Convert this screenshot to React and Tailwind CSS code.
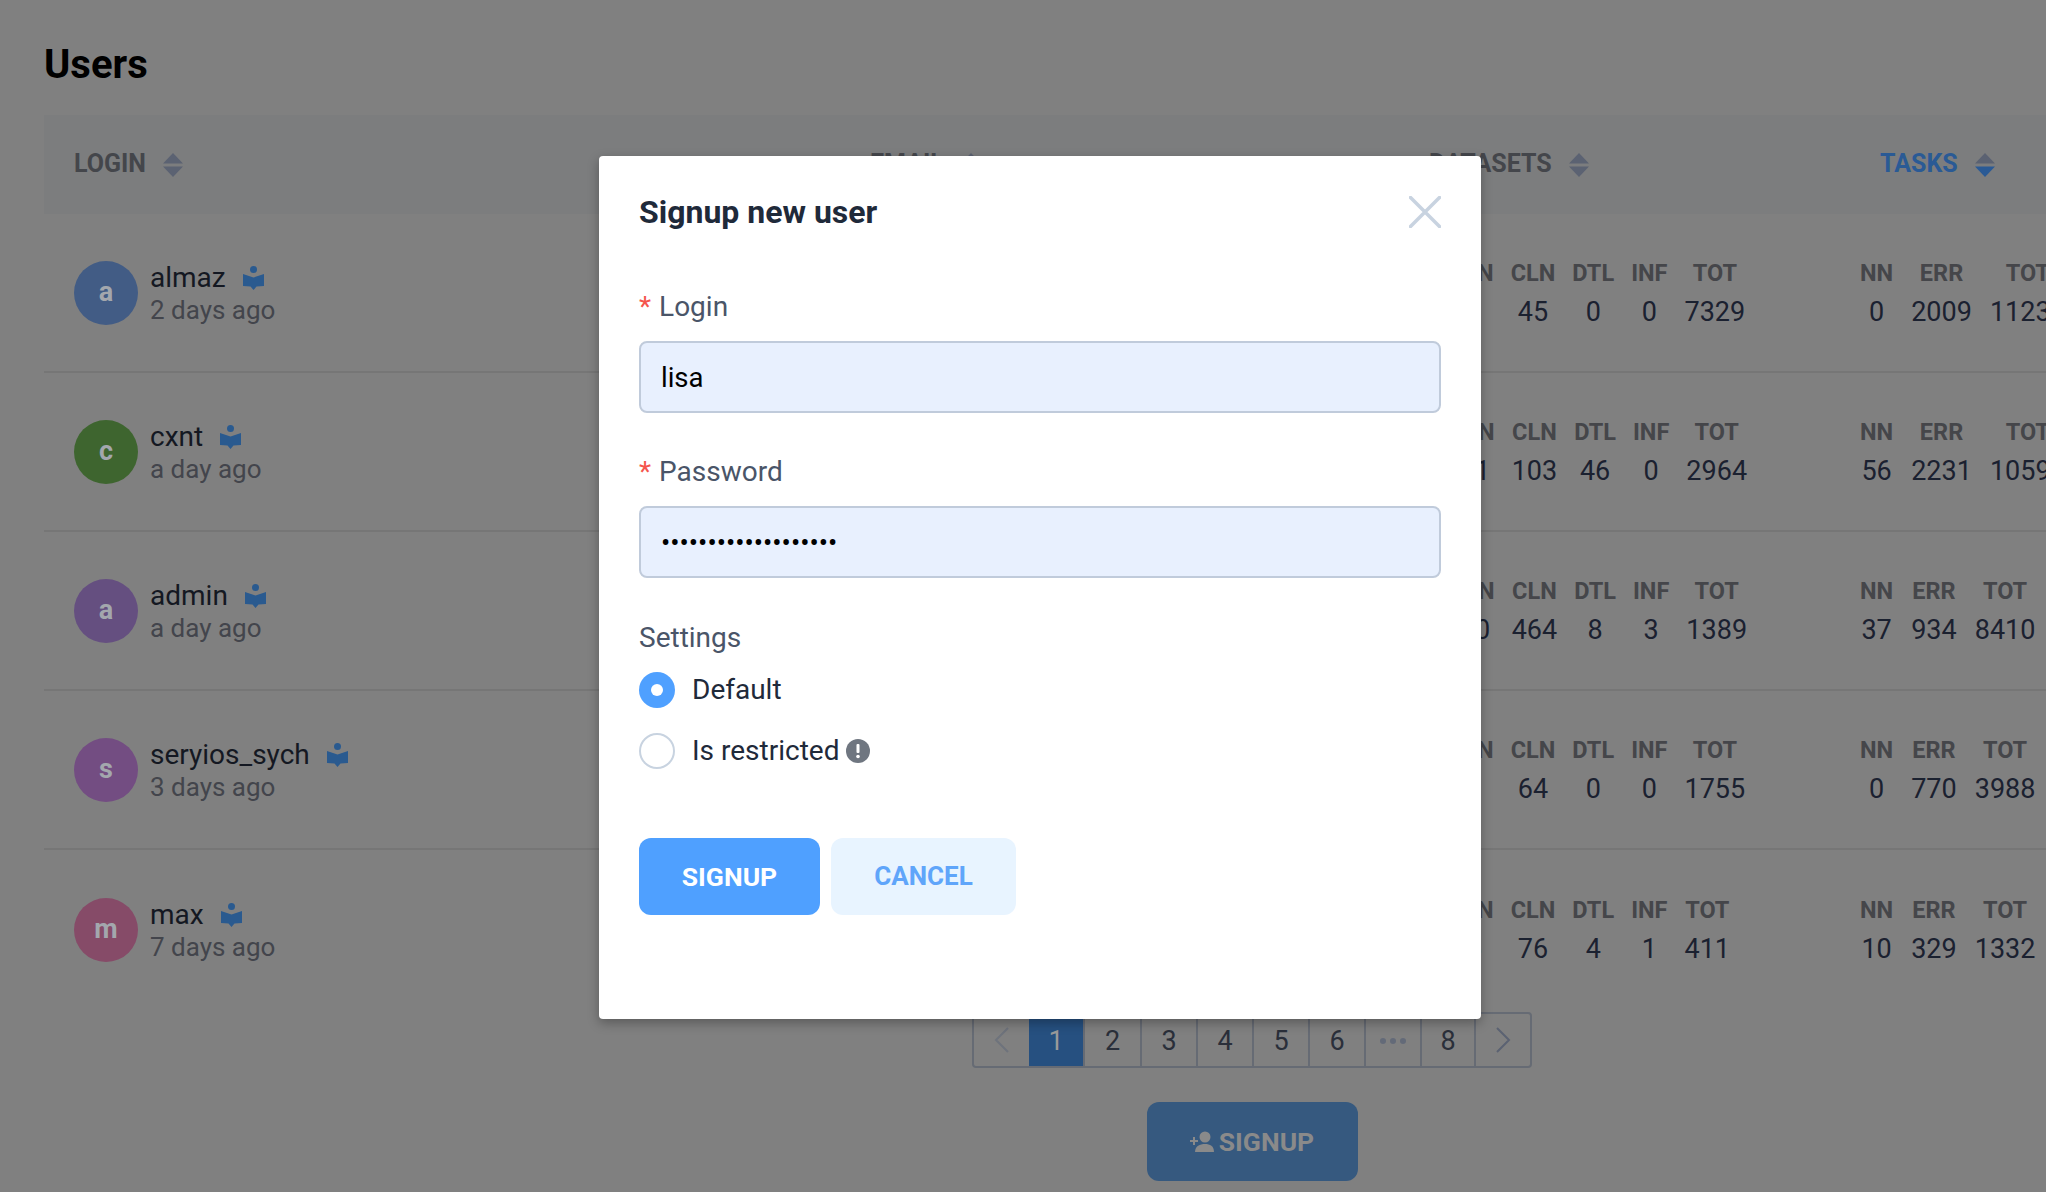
const users = [
  { l: 'a', name: 'almaz', ago: '2 days ago', c: 'bg-[#425c85]', shift: '', d: ['0', '45', '0', '0', '7329'], t: ['0', '2009', '11234'] },
  { l: 'c', name: 'cxnt', ago: 'a day ago', c: 'bg-[#3e652f]', shift: 'ml-[1px]', d: ['21', '103', '46', '0', '2964'], t: ['56', '2231', '10598'] },
  { l: 'a', name: 'admin', ago: 'a day ago', c: 'bg-[#654f80]', shift: 'ml-[1px]', d: ['10', '464', '8', '3', '1389'], t: ['37', '934', '8410'] },
  { l: 's', name: 'seryios_sych', ago: '3 days ago', c: 'bg-[#734d82]', shift: '', d: ['0', '64', '0', '0', '1755'], t: ['0', '770', '3988'] },
  { l: 'm', name: 'max', ago: '7 days ago', c: 'bg-[#864b68]', shift: '', d: ['5', '76', '4', '1', '411'], t: ['10', '329', '1332'] },
];

function Sort({ active }) {
  return (
    <svg width="20" height="24" viewBox="0 0 20 24" className="shrink-0">
      <path d="M10 0 L20 10.5 H0 Z" fill="#5b6272" />
      <path d="M0 13.5 H20 L10 24 Z" fill={active ? '#2a5a95' : '#5b6272'} />
    </svg>
  );
}

function Reader() {
  return (
    <svg width="21" height="24" viewBox="0 0 21 24" className="shrink-0">
      <circle cx="10.5" cy="3.6" r="3.5" fill="#2a5a8f" />
      <path d="M0 8 L10.5 11.5 L21 8 V20 L13.5 20.6 L10.5 24 L7.5 20.6 L0 20 Z" fill="#2a5a8f" />
    </svg>
  );
}

function Head({ label, active, className }) {
  return (
    <div className={`flex items-center gap-[17px] font-bold text-[25px] ${active ? 'text-[#2a5a95]' : 'text-[#44464b]'} ${className}`}>
      <span className="-mt-[1px]">{label}</span>
      <Sort active={active} />
    </div>
  );
}

function Stats({ heads, values, className, pad, firstValue = '' }) {
  return (
    <table className={`text-center ${className}`}>
      <thead>
        <tr className="h-[38px]">
          {heads.map((h) => (
            <th key={h} className={`${pad} py-0 font-bold text-[23.5px] text-[#45464a]`}>{h}</th>
          ))}
        </tr>
      </thead>
      <tbody>
        <tr className="h-[38px]">
          {values.map((v, i) => (
            <td key={i} className={`${pad} py-0 text-[27px] text-[#1b2130]`}>
              <span className={`inline-block ${i === 0 ? firstValue : ''}`}>{v}</span>
            </td>
          ))}
        </tr>
      </tbody>
    </table>
  );
}

function Page({ children, active, w = 'w-[56px]' }) {
  return (
    <div className={`${w} h-full pt-[2px] flex items-center justify-center border-r-2 border-[#666b74] text-[27px] ${active ? 'bg-[#265080] text-[#9a9a9a] border-r-0' : 'text-[#2a2f3a]'}`}>
      {children}
    </div>
  );
}

function Field({ label, type, value, className }) {
  return (
    <div className={className}>
      <div className="h-[40px] flex items-center text-[28px] text-[#4a5568]">
        <span className="text-[#f5554d] mr-[8px]">*</span>
        {label}
      </div>
      <input
        readOnly
        type={type}
        defaultValue={value}
        className="mt-[14px] block w-full h-[72px] rounded-[8px] border-2 border-[#c0cbdb] bg-[#e8f0fe] px-[20px] text-[27.5px] text-black outline-none"
      />
    </div>
  );
}

export default function App() {
  return (
    <div className="relative w-full h-[1192px] overflow-hidden bg-[#808080] font-['Roboto',sans-serif]">
      <div className="w-[2416px] ml-[44px]">
        <h1 className="pt-[41px] h-[88px] leading-[48px] text-[40px] font-bold text-black">Users</h1>

        <div className="mt-[27px] h-[99px] bg-[#7c7d7e] grid grid-cols-[796px_559px_451px_1fr] items-center">
          <Head label="LOGIN" className="pl-[30px]" />
          <Head label="EMAIL" className="pl-[30px]" />
          <Head label="DATASETS" className="pl-[30px]" />
          <Head label="TASKS" active className="pl-[30px]" />
        </div>

        {users.map((u, i) => (
          <div
            key={u.name}
            className={`h-[159px] grid grid-cols-[796px_559px_451px_1fr] items-center ${i < users.length - 1 ? 'border-b-2 border-[#767676]' : ''}`}
          >
            <div className="pl-[30px] flex items-center gap-[12px]">
              <div className={`w-[64px] h-[64px] rounded-full flex items-center justify-center text-[27px] font-bold text-[#a3a7ad] ${u.c}`}>
                {u.l}
              </div>
              <div className="flex flex-col mt-[2px]">
                <div className="flex items-center gap-[17px] h-[32px] text-[28px] text-[#141822]">
                  <span>{u.name}</span>
                  <Reader />
                </div>
                <div className="h-[32px] leading-[32px] text-[26px] text-[#43454c]">{u.ago}</div>
              </div>
            </div>
            <div />
            <div className={`mt-[2px] ${u.shift}`}>
              <Stats
                heads={['NN', 'CLN', 'DTL', 'INF', 'TOT']}
                values={u.d}
                pad="px-[8.5px]"
                firstValue="-translate-x-[3px]"
                className="ml-[53px]"
              />
            </div>
            <div className="mt-[2px]">
              <Stats heads={['NN', 'ERR', 'TOT']} values={u.t} pad="px-[9px]" className="ml-[1px]" />
            </div>
          </div>
        ))}

        <div className="mt-[3px] flex justify-center">
          <div className="h-[56px] flex items-center rounded-[4px] border-2 border-[#666b74]">
            <div className="w-[55px] h-full flex items-center justify-center">
              <svg width="16" height="26" viewBox="0 0 16 26" fill="none" stroke="#6e737c" strokeWidth="2"><path d="M14 1 L2 13 L14 25" /></svg>
            </div>
            <Page active>1</Page>
            <Page w="w-[57px]">2</Page>
            <Page>3</Page>
            <Page>4</Page>
            <Page>5</Page>
            <Page>6</Page>
            <Page>
              <svg width="28" height="8" viewBox="0 0 28 8" fill="#636a78"><circle cx="4" cy="4" r="3" /><circle cx="14" cy="4" r="3" /><circle cx="24" cy="4" r="3" /></svg>
            </Page>
            <Page w="w-[54px]">8</Page>
            <div className="w-[54px] h-full flex items-center justify-center">
              <svg width="16" height="26" viewBox="0 0 16 26" fill="none" stroke="#5b6272" strokeWidth="2"><path d="M2 1 L14 13 L2 25" /></svg>
            </div>
          </div>
        </div>

        <div className="mt-[34px] flex justify-center">
          <button className="w-[211px] h-[79px] rounded-[12px] bg-[#36597f] flex items-center justify-center gap-[5px] text-[26.5px] font-bold text-[#8a8a8a]">
            <svg width="24" height="22" viewBox="0 0 24 22" fill="#8a8a8a">
              <circle cx="15" cy="6" r="5.5" />
              <path d="M5 21 C5 15 10 13 15 13 C20 13 24 15 24 21 Z" />
              <path d="M3 6 V9 H0 V11 H3 V14 H5 V11 H8 V9 H5 V6 Z" />
            </svg>
            SIGNUP
          </button>
        </div>
      </div>

      <div className="absolute left-[599px] top-[156px] w-[882px] h-[863px] rounded-[4px] bg-white shadow-[0_4px_12px_rgba(0,0,0,0.3)] px-[40px]">
        <div className="mt-[36px] h-[40px] box-content flex items-center justify-between">
          <h2 className="text-[32px] font-bold text-[#1f2a3a]">Signup new user</h2>
          <svg width="32" height="32" viewBox="0 0 32 32" stroke="#c8d3e0" strokeWidth="3.5" strokeLinecap="round">
            <path d="M1.5 1.5 L30.5 30.5 M30.5 1.5 L1.5 30.5" />
          </svg>
        </div>

        <Field label="Login" type="text" value="lisa" className="mt-[55px]" />
        <Field label="Password" type="password" value="aaaaaaaaaaaaaaaaaaa" className="mt-[39px]" />

        <div className="mt-[40px] h-[40px] flex items-center text-[28px] text-[#4a5568]">Settings</div>

        <div className="mt-[14px] flex items-center gap-[17px] h-[36px]">
          <div className="w-[36px] h-[36px] rounded-full bg-[#4fa0ff] flex items-center justify-center">
            <div className="w-[12px] h-[12px] rounded-full bg-white" />
          </div>
          <span className="text-[28px] text-[#1f2a3a]">Default</span>
        </div>
        <div className="mt-[25px] flex items-center gap-[17px] h-[36px]">
          <div className="w-[36px] h-[36px] rounded-full border-2 border-[#c8d3e0]" />
          <span className="text-[28px] text-[#1f2a3a]">Is restricted</span>
          <svg width="24" height="24" viewBox="0 0 24 24" className="-ml-[10px]">
            <circle cx="12" cy="12" r="12" fill="#6f7680" />
            <rect x="10.5" y="5" width="3" height="9" rx="1" fill="white" />
            <circle cx="12" cy="17.5" r="1.8" fill="white" />
          </svg>
        </div>

        <div className="mt-[69px] flex gap-[11px]">
          <button className="w-[181px] h-[77px] rounded-[12px] bg-[#4fa0ff] text-white font-bold text-[26.5px]">SIGNUP</button>
          <button className="w-[185px] h-[77px] rounded-[12px] bg-[#e8f4ff] text-[#5fa5fa] font-bold text-[26px]">CANCEL</button>
        </div>
      </div>
    </div>
  );
}
